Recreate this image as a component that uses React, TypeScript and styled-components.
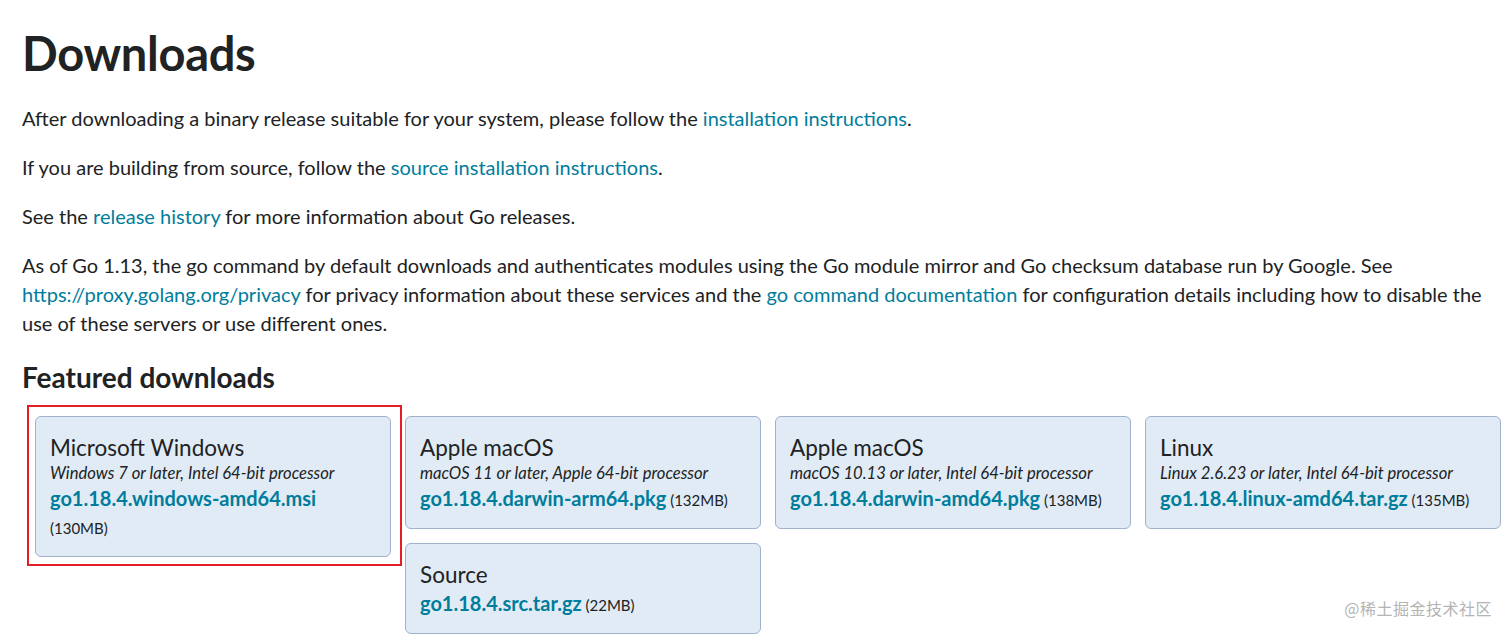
import styled, { createGlobalStyle } from "styled-components";

const GlobalStyle = createGlobalStyle`
  html, body {
    margin: 0;
    padding: 0;
    background: #ffffff;
  }
  body {
    font-family: Lato, "Noto Sans", "Liberation Sans", sans-serif;
    color: #202224;
  }
`;

const Page = styled.main`
  position: relative;
  width: 1512px;
  height: 638px;
  overflow: hidden;
  padding: 0 0 0 22px;
  box-sizing: border-box;
`;

const Title = styled.h1`
  margin: 0;
  padding-top: 26px;
  font-size: 47px;
  line-height: 54px;
  font-weight: 700;
  letter-spacing: -0.3px;
`;

const Paragraph = styled.p`
  margin: 0;
  font-size: 20px;
  line-height: 29px;
  max-width: 1480px;
  & + & {
    margin-top: 20px;
  }
`;

const Intro = styled.section`
  margin-top: 24px;
`;

const Link = styled.a`
  color: #007d9c;
  text-decoration: none;
`;

const SubTitle = styled.h2`
  margin: 22px 0 0;
  font-size: 28px;
  line-height: 34px;
  font-weight: 700;
`;

const Cards = styled.div`
  display: flex;
  align-items: flex-start;
  gap: 14px;
  margin: 22px 0 0 13px;
`;

const Column = styled.div`
  display: flex;
  flex-direction: column;
  gap: 14px;
  width: 356px;
`;

const CardWrap = styled.div`
  position: relative;
`;

const Highlight = styled.div`
  position: absolute;
  top: -11px;
  left: -8px;
  right: -11px;
  bottom: -9px;
  border: 2px solid #e31e24;
  pointer-events: none;
`;

const Card = styled.div`
  box-sizing: border-box;
  background: #e0ebf5;
  border: 1px solid #9fb1cb;
  border-radius: 6px;
  padding: 16px 14px 14px;
`;

const Platform = styled.div`
  font-size: 22.5px;
  line-height: 29px;
  font-weight: 400;
`;

const Requirement = styled.div`
  font-size: 16.6px;
  line-height: 22px;
  font-style: italic;
`;

const FileLine = styled.div`
  font-size: 15px;
  line-height: 28px;
`;

const FileLink = styled.a`
  color: #007d9c;
  text-decoration: none;
  font-size: 20px;
  font-weight: 700;
  white-space: nowrap;
`;

const Watermark = styled.div`
  position: absolute;
  right: 20px;
  bottom: 18px;
  font-family: "Noto Sans CJK SC", sans-serif;
  font-size: 16px;
  color: #b4b4b4;
  letter-spacing: 0.5px;
`;

type Download = {
  platform?: string;
  requirement?: string;
  file: string;
  size: string;
};

function DownloadCard({ platform, requirement, file, size }: Download) {
  return (
    <Card>
      {platform && <Platform>{platform}</Platform>}
      {requirement && <Requirement>{requirement}</Requirement>}
      <FileLine>
        <FileLink href="#">{file}</FileLink> {size}
      </FileLine>
    </Card>
  );
}

export default function App() {
  return (
    <>
      <GlobalStyle />
      <Page>
        <Title>Downloads</Title>
        <Intro>
          <Paragraph>
            After downloading a binary release suitable for your system, please
            follow the <Link href="#">installation instructions</Link>.
          </Paragraph>
          <Paragraph>
            If you are building from source, follow the{" "}
            <Link href="#">source installation instructions</Link>.
          </Paragraph>
          <Paragraph>
            See the <Link href="#">release history</Link> for more information
            about Go releases.
          </Paragraph>
          <Paragraph>
            As of Go 1.13, the go command by default downloads and authenticates
            modules using the Go module mirror and Go checksum database run by
            Google. See <Link href="#">https://proxy.golang.org/privacy</Link>{" "}
            for privacy information about these services and the{" "}
            <Link href="#">go command documentation</Link> for configuration
            details including how to disable the use of these servers or use
            different ones.
          </Paragraph>
        </Intro>
        <SubTitle>Featured downloads</SubTitle>
        <Cards>
          <Column>
            <CardWrap>
              <Highlight />
              <DownloadCard
                platform="Microsoft Windows"
                requirement="Windows 7 or later, Intel 64-bit processor"
                file="go1.18.4.windows-amd64.msi"
                size="(130MB)"
              />
            </CardWrap>
          </Column>
          <Column>
            <DownloadCard
              platform="Apple macOS"
              requirement="macOS 11 or later, Apple 64-bit processor"
              file="go1.18.4.darwin-arm64.pkg"
              size="(132MB)"
            />
            <DownloadCard
              platform="Source"
              file="go1.18.4.src.tar.gz"
              size="(22MB)"
            />
          </Column>
          <Column>
            <DownloadCard
              platform="Apple macOS"
              requirement="macOS 10.13 or later, Intel 64-bit processor"
              file="go1.18.4.darwin-amd64.pkg"
              size="(138MB)"
            />
          </Column>
          <Column>
            <DownloadCard
              platform="Linux"
              requirement="Linux 2.6.23 or later, Intel 64-bit processor"
              file="go1.18.4.linux-amd64.tar.gz"
              size="(135MB)"
            />
          </Column>
        </Cards>
        <Watermark>@稀土掘金技术社区</Watermark>
      </Page>
    </>
  );
}
